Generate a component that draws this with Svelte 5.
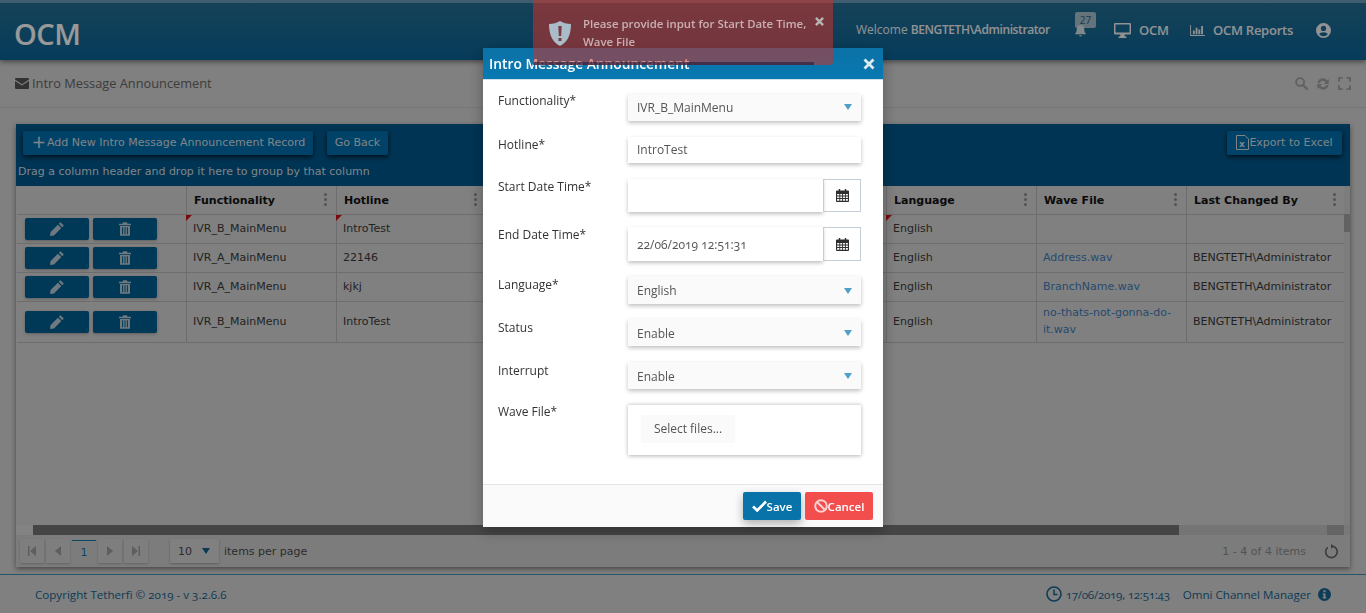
<script>
  const rows = [
    { fn: 'IVR_B_MainMenu', hotline: 'IntroTest', lang: 'English', wave: '', by: '', flagged: true },
    { fn: 'IVR_A_MainMenu', hotline: '22146', lang: 'English', wave: 'Address.wav', by: 'BENGTETH\\Administrator' },
    { fn: 'IVR_A_MainMenu', hotline: 'kjkj', lang: 'English', wave: 'BranchName.wav', by: 'BENGTETH\\Administrator' },
    { fn: 'IVR_B_MainMenu', hotline: 'IntroTest', lang: 'English', wave: 'no-thats-not-gonna-do-it.wav', by: 'BENGTETH\\Administrator', tall: true }
  ]
  const heads = ['', 'Functionality', 'Hotline', '', 'Language', 'Wave File', 'Last Changed By']
</script>

{#snippet pencil()}
  <svg class="ico" viewBox="0 0 16 16" width="16" height="16"><path d="M11.400 1.200 14.800 4.600 13.200 6.200 9.800 2.800ZM8.900 3.700 12.300 7.100 5 14.400 1 15 1.600 11Z" fill="currentColor"/></svg>
{/snippet}
{#snippet trash()}
  <svg class="ico" viewBox="0 0 14 16" width="12" height="14"><path d="M5 0h4l1 2h4v1.500H0V2h4ZM1.200 4.500h11.600V15a1 1 0 0 1-1 1H2.200a1 1 0 0 1-1-1ZM3.600 6v8h1.200V6ZM6.400 6v8h1.200V6ZM9.200 6v8h1.200V6Z" fill="currentColor" fill-rule="evenodd"/></svg>
{/snippet}
{#snippet calendar()}
  <svg viewBox="0 0 14 14" width="13" height="13"><path d="M3 0h1.500v1.500h5V0H11v1.500h2a1 1 0 0 1 1 1V13a1 1 0 0 1-1 1H1a1 1 0 0 1-1-1V2.500a1 1 0 0 1 1-1h2ZM1.200 5.300v1.700h2.400V5.300ZM4.600 5.300v1.700h2V5.300ZM7.600 5.300v1.700h2V5.300ZM10.600 5.300v1.700h2.200V5.300ZM1.200 8v1.800h2.400V8ZM4.600 8v1.800h2V8ZM7.600 8v1.800h2V8ZM10.600 8v1.800h2.200V8ZM1.200 10.800v1.900h2.400v-1.900ZM4.600 10.800v1.900h2v-1.900ZM7.600 10.800v1.900h2v-1.900ZM10.600 10.800v1.900h2.200v-1.900Z" fill="#2e2e2e" fill-rule="evenodd"/></svg>
{/snippet}
{#snippet caret()}
  <span class="caret"></span>
{/snippet}

<div class="page">
  <header class="nav">
    <div class="logo">OCM</div>
    <div class="nav-right">
      <span class="welcome">Welcome <b>BENGTETH\Administrator</b></span>
      <span class="bell">
        <span class="badge">27</span>
        <svg viewBox="0 0 14 14" width="13" height="13"><path d="M7 1a4 4 0 0 1 4 4c0 3.500 1 4.500 2 5.500v.5H1v-.5c1-1 2-2 2-5.500a4 4 0 0 1 4-4ZM5.500 12h3a1.500 1.500 0 0 1-3 0Z" fill="currentColor"/></svg>
      </span>
      <span class="nav-link nav-ocm">
        <svg viewBox="0 0 17 15" width="17" height="15"><path d="M1.200 0h14.600A1.200 1.200 0 0 1 17 1.200v9.100a1.200 1.200 0 0 1-1.200 1.200H10.500l.5 2H12.500V15h-8v-1.500H6l.5-2H1.200A1.200 1.200 0 0 1 0 10.300V1.200A1.200 1.200 0 0 1 1.200 0ZM1.500 1.500V9.500h14V1.500Z" fill="currentColor" fill-rule="evenodd"/></svg>
        OCM
      </span>
      <span class="nav-link nav-rep">
        <svg viewBox="0 0 16 12" width="15" height="11"><path d="M0 0h1v11h15v1H0ZM3 6h2v4H3ZM6 3h2v7H6ZM9 5h2v5H9ZM12 1h2v9h-2Z" fill="currentColor"/></svg>
        OCM Reports
      </span>
      <svg class="user" viewBox="0 0 16 16" width="15" height="15"><path d="M8 0a8 8 0 1 1 0 16A8 8 0 0 1 8 0ZM8 3a2.800 2.800 0 1 0 0 5.600A2.800 2.800 0 0 0 8 3ZM8 9.800c-2.200 0-4 .8-4.500 2.200A6 6 0 0 0 8 14a6 6 0 0 0 4.500-2c-.5-1.400-2.300-2.200-4.500-2.200Z" fill="currentColor" fill-rule="evenodd"/></svg>
    </div>
  </header>

  <div class="titlebar">
    <svg viewBox="0 0 14 11" width="14" height="11"><path d="M0 1a1 1 0 0 1 1-1h12a1 1 0 0 1 1 1v.6L7 6.200 0 1.600ZM0 3l7 4.500L14 3v7a1 1 0 0 1-1 1H1a1 1 0 0 1-1-1Z" fill="#555"/></svg>
    <span class="crumb">Intro Message Announcement</span>
    <div class="tools">
      <svg viewBox="0 0 14 14" width="13" height="13"><circle cx="5.500" cy="5.500" r="4.300" fill="none" stroke="currentColor" stroke-width="2"/><path d="M8.800 8.800 13 13" stroke="currentColor" stroke-width="2.400" stroke-linecap="round"/></svg>
      <svg viewBox="0 0 14 14" width="14" height="14"><path d="M1.500 6a5.500 5.500 0 0 1 9.700-2.600L12.800 2V7H7.800l1.800-1.800A3.300 3.300 0 0 0 3.700 6ZM12.500 8a5.500 5.500 0 0 1-9.700 2.600L1.200 12V7H6.200L4.400 8.800A3.300 3.300 0 0 0 10.300 8Z" fill="currentColor"/></svg>
      <svg viewBox="0 0 14 14" width="13" height="13"><path d="M0 0h5v2H2v3H0ZM9 0h5v5h-2V2H9ZM0 9h2v3h3v2H0ZM12 9h2v5H9v-2h3Z" fill="currentColor"/></svg>
    </div>
  </div>

  <main class="content">
    <section class="card">
      <div class="toolbar">
        <div class="toolbar-btns">
          <button class="tbtn add"><span class="plus">+</span>Add New Intro Message Announcement Record</button>
          <button class="tbtn back">Go Back</button>
          <button class="tbtn export">
            <svg viewBox="0 0 13 15" width="13" height="15"><path d="M.5.500H9L12.500 4v10.500H.5Z" fill="none" stroke="currentColor"/><text x="3" y="12" font-size="9" font-weight="700" fill="currentColor" font-family="DejaVu Sans">x</text></svg>Export to Excel
          </button>
        </div>
        <div class="drag">Drag a column header and drop it here to group by that column</div>
      </div>

      <div class="grid">
        <div class="gcols">
          <div class="row head">
            {#each heads as h, i}
              <div class="cell">
                {h}
                {#if h}<span class="dots"><i></i><i></i><i></i></span>{/if}
              </div>
            {/each}
          </div>
          {#each rows as r}
            <div class="row" class:tall={r.tall}>
              <div class="cell acts">
                <button class="act">{@render pencil()}</button>
                <button class="act">{@render trash()}</button>
              </div>
              <div class="cell" class:dirty={r.flagged}>{r.fn}</div>
              <div class="cell" class:dirty={r.flagged}>{r.hotline}</div>
              <div class="cell"></div>
              <div class="cell" class:dirty={r.flagged}>{r.lang}</div>
              <div class="cell link">{r.wave}</div>
              <div class="cell">{r.by}</div>
            </div>
          {/each}
        </div>
        <div class="vscroll"><span></span></div>
      </div>

      <div class="hscroll"><span class="start"></span><span class="thumb"></span><span class="track"></span><span class="end"></span></div>

      <div class="pager">
        <span class="pbtn"><svg viewBox="0 0 8 10" width="8" height="10"><path d="M0 0h1.500v10H0ZM8 0v10L2 5Z" fill="currentColor"/></svg></span>
        <span class="pbtn"><svg viewBox="0 0 6 10" width="6" height="10"><path d="M6 0v10L0 5Z" fill="currentColor"/></svg></span>
        <span class="pcur">1</span>
        <span class="pbtn"><svg viewBox="0 0 6 10" width="6" height="10"><path d="M0 0v10L6 5Z" fill="currentColor"/></svg></span>
        <span class="pbtn"><svg viewBox="0 0 8 10" width="8" height="10"><path d="M0 0v10L6 5ZM6.500 0H8v10H6.500Z" fill="currentColor"/></svg></span>
        <span class="psize">10 {@render caret()}</span>
        <span class="pinfo">items per page</span>
        <span class="pcount">1 - 4 of 4 items</span>
        <svg class="preload" viewBox="0 0 16 16" width="15" height="15"><path d="M9.500 2.300A6.200 6.200 0 1 1 4 3.500" fill="none" stroke="currentColor" stroke-width="1.700"/><path d="M7.500 0 11 2.500 7.500 5Z" fill="currentColor"/></svg>
      </div>
    </section>
  </main>

  <footer class="foot">
    <span>Copyright Tetherfi © 2019 - v 3.2.6.6</span>
    <span class="foot-right">
      <svg viewBox="0 0 16 16" width="16" height="16"><circle cx="8" cy="8" r="7" fill="none" stroke="currentColor" stroke-width="1.600"/><path d="M8 3.500V8.500H11.500" fill="none" stroke="currentColor" stroke-width="1.500"/></svg>
      <span class="stamp">17/06/2019, 12:51:43</span>
      <span class="omni">Omni Channel Manager</span>
      <svg viewBox="0 0 14 14" width="13" height="13"><path d="M7 0a7 7 0 1 1 0 14A7 7 0 0 1 7 0ZM5.800 2.500v2h2.400v-2ZM5 6v1.200h.9V10H5v1.200h4V10H8.100V6Z" fill="currentColor" fill-rule="evenodd"/></svg>
    </span>
  </footer>
</div>

<div class="overlay"></div>

<div class="modal">
  <div class="mhead">
    <span>Intro Message Announcement</span>
    <svg viewBox="0 0 12 12" width="12" height="12"><path d="M1.500 1.500 10.500 10.500M10.500 1.500 1.500 10.500" stroke="#dfe9f0" stroke-width="2.800"/></svg>
  </div>
  <div class="mbody">
    <div class="frow r1"><label>Functionality*</label><div class="sel">IVR_B_MainMenu {@render caret()}</div></div>
    <div class="frow r2"><label>Hotline*</label><div class="inp">IntroTest</div></div>
    <div class="frow r3"><label>Start Date Time*</label><div class="date"><div class="inp"></div><span class="cal">{@render calendar()}</span></div></div>
    <div class="frow r4"><label>End Date Time*</label><div class="date"><div class="inp nums">22/06/2019 12:51:31</div><span class="cal">{@render calendar()}</span></div></div>
    <div class="frow r5"><label>Language*</label><div class="sel">English {@render caret()}</div></div>
    <div class="frow r6"><label>Status</label><div class="sel">Enable {@render caret()}</div></div>
    <div class="frow r7"><label>Interrupt</label><div class="sel">Enable {@render caret()}</div></div>
    <div class="frow r8"><label>Wave File*</label><div class="upload"><span class="pick">Select files...</span></div></div>
  </div>
  <div class="mfoot">
    <button class="save">
      <svg viewBox="0 0 15 12" width="15" height="12"><path d="M1 6.500 5.200 10.500 14 1.500" fill="none" stroke="#fff" stroke-width="2.600"/></svg>Save
    </button>
    <button class="cancel">
      <svg viewBox="0 0 14 14" width="14" height="14"><circle cx="7" cy="7" r="5.800" fill="none" stroke="#fbd0d0" stroke-width="2"/><path d="M3 3 11 11" stroke="#fbd0d0" stroke-width="2"/></svg>Cancel
    </button>
  </div>
</div>

<div class="toast">
  <svg class="shield" viewBox="0 0 22 25" width="22" height="25"><path d="M11 0c3 2 7 3 11 3 0 10-3 18-11 22C3 21 0 13 0 3c4 0 8-1 11-3Z" fill="#a9bcc7"/><path d="M9.300 5h3.400l-.5 10H9.800ZM9.500 17h3v3h-3Z" fill="#7a3c44"/></svg>
  <div class="toast-msg">Please provide input for Start Date Time, Wave File</div>
  <svg class="toast-x" viewBox="0 0 10 10" width="9" height="9"><path d="M1 1 9 9M9 1 1 9" stroke="#b9b4b4" stroke-width="2.600"/></svg>
  <div class="progress"></div>
</div>

<style>
  :global(body) {
    margin: 0;
    background: #d5d5d5;
    font-family: "Open Sans", sans-serif;
    overflow: hidden;
  }
  button {
    font: inherit;
    border: 0;
    cursor: pointer;
  }
  .page {
    width: 1366px;
    height: 613px;
    display: flex;
    flex-direction: column;
    overflow: hidden;
  }
  .nav {
    height: 57px;
    flex: none;
    border-top: 3px solid #6a9cb8;
    background: linear-gradient(#246e92, #0a6497);
    box-shadow: 0 2px 5px rgba(0, 0, 0, 0.45);
    display: flex;
    align-items: center;
    color: #fff;
    position: relative;
  }
  .logo {
    font-size: 29px;
    font-weight: 600;
    margin-left: 14px;
    letter-spacing: -0.5px;
    margin-top: 3px;
  }
  .nav-right {
    margin-left: auto;
    display: flex;
    align-items: center;
    font-size: 13px;
    color: #f2f4f5;
    margin-right: 35px;
    margin-top: -3px;
  }
  .welcome {
    font-size: 12px;
    width: 218px;
    white-space: nowrap;
    margin-top: -1px;
  }
  .welcome b {
    font-weight: 600;
    letter-spacing: -0.4px;
  }
  .bell {
    position: relative;
    width: 40px;
    height: 24px;
    margin-top: -8px;
    display: flex;
    align-items: flex-end;
    color: #d8e2e8;
  }
  .bell svg {
    position: relative;
    margin-bottom: 1px;
  }
  .badge {
    position: absolute;
    left: 1px;
    top: -2px;
    width: 21px;
    height: 16px;
    background: #a8c0cc;
    border-radius: 2px;
    font-size: 10px;
    line-height: 16px;
    text-align: center;
    color: #2b6584;
  }
  .nav-link {
    display: flex;
    align-items: center;
    gap: 8px;
    font-weight: 600;
    letter-spacing: -0.25px;
  }
  .nav-ocm {
    width: 76px;
  }
  .nav-rep {
    width: 126px;
  }
  .user {
    color: #f2f4f5;
  }
  .titlebar {
    height: 47px;
    flex: none;
    border-bottom: 1px solid #c4c4c4;
    display: flex;
    align-items: center;
    gap: 3px;
    padding: 0 15px;
    font-size: 12.8px;
    color: #666;
  }
  .crumb {
    margin-top: -1px;
  }
  .tools {
    margin-left: auto;
    display: flex;
    align-items: center;
    gap: 8px;
    color: #a2a2a2;
  }
  .content {
    flex: none;
    height: 467px;
    padding: 16px 16px 0;
    box-sizing: border-box;
    border-bottom: 1px solid #3d8fb3;
  }
  .card {
    height: 443px;
    display: flex;
    flex-direction: column;
    box-shadow: 0 2px 5px rgba(0, 0, 0, 0.45);
    font-family: "DejaVu Sans", sans-serif;
    font-size: 11px;
  }
  .toolbar {
    height: 62px;
    flex: none;
    background: #00588c;
    box-sizing: border-box;
    padding: 7px 8px 0 2px;
    color: #d5dde2;
  }
  .toolbar-btns {
    display: flex;
    height: 24px;
  }
  .tbtn {
    background: #006fae;
    color: #d5dde2;
    border-radius: 2px;
    height: 24px;
    padding: 0 0 2px;
    font-family: "DejaVu Sans", sans-serif;
    font-size: 11px;
    box-shadow: 0 2px 5px rgba(0, 0, 0, 0.7);
    display: flex;
    align-items: center;
    justify-content: center;
  }
  .add {
    width: 290px;
    margin-left: 5px;
    padding-left: 1px;
  }
  .plus {
    font-size: 17px;
    line-height: 1;
    margin-right: 1px;
  }
  .back {
    width: 61px;
    margin-left: 14px;
  }
  .export {
    width: 115px;
    margin-left: auto;
  }
  .drag {
    margin-top: 10px;
    font-weight: 400;
  }
  .grid {
    flex: 1;
    min-height: 0;
    display: flex;
    background: #d5d5d5;
    padding-left: 1px;
  }
  .gcols {
    width: 1327px;
  }
  .row {
    display: grid;
    grid-template-columns: 170px 150px 150px 400px 150px 150px 157px;
    height: 29px;
    border-bottom: 1px solid #b6b6b6;
    box-sizing: border-box;
    color: #3a3a3a;
  }
  .row.head {
    height: 29px;
    font-weight: 700;
    color: #111;
  }
  .row.tall {
    height: 41px;
  }
  .cell {
    position: relative;
    border-right: 1px solid #b6b6b6;
    padding: 0 6px 2px;
    display: flex;
    align-items: center;
    line-height: 17px;
  }
  .head .cell {
    padding: 0 6px 0 7px;
  }
  .row .cell:last-child {
    border-right: 0;
  }
  .dirty::before {
    content: "";
    position: absolute;
    left: -1px;
    top: 0;
    border-style: solid;
    border-width: 6px 6px 0 0;
    border-color: #d01018 transparent transparent transparent;
  }
  .link {
    color: #3f7cb8;
  }
  .dots {
    position: absolute;
    right: 9px;
    top: 7px;
    display: flex;
    flex-direction: column;
    gap: 2px;
  }
  .cell:last-child .dots {
    right: 8px;
  }
  .dots i {
    width: 3px;
    height: 3px;
    border-radius: 50%;
    background: #8a8a8a;
  }
  .acts {
    padding: 0 0 0 8px;
    gap: 4px;
  }
  .act {
    width: 64px;
    height: 22px;
    background: #005f92;
    color: #b9cad5;
    border-radius: 2px;
    padding: 0;
    display: flex;
    align-items: center;
    justify-content: center;
    box-shadow: 0 1px 3px rgba(0, 0, 0, 0.25);
  }
  .vscroll {
    width: 6px;
    margin-left: auto;
    background: #cfcfcf;
    position: relative;
  }
  .vscroll span {
    position: absolute;
    top: 28px;
    left: 0;
    width: 6px;
    height: 18px;
    background: #a3a3a3;
  }
  .hscroll {
    height: 10px;
    flex: none;
    display: flex;
    background: #c8c8c8;
  }
  .hscroll span {
    display: block;
  }
  .start {
    width: 17px;
    background: #dadada;
  }
  .thumb {
    width: 1146px;
    background: #747474;
  }
  .track {
    width: 148px;
    background: #c4c4c4;
  }
  .end {
    width: 17px;
    background: #a8a8a8;
  }
  .pager {
    height: 32px;
    flex: none;
    display: flex;
    align-items: center;
    padding: 0 11px 0 4px;
    background: #cfcfcf;
    font-size: 11px;
    color: #4a4a4a;
  }
  .pbtn {
    width: 24px;
    height: 24px;
    margin-right: 2px;
    background: #d2d2d2;
    box-shadow: 0 1px 2px rgba(0, 0, 0, 0.2);
    display: flex;
    align-items: center;
    justify-content: center;
    color: #9d9d9d;
  }
  .pcur {
    width: 24px;
    height: 23px;
    margin-right: 2px;
    margin-top: 1px;
    border-top: 1px solid #1675a8;
    line-height: 24px;
    text-align: center;
    color: #1675a8;
  }
  .psize {
    margin-left: 20px;
    width: 49px;
    height: 24px;
    box-sizing: border-box;
    padding: 0 9px 0 8px;
    background: #d5d5d5;
    box-shadow: 0 1px 2px rgba(0, 0, 0, 0.25);
    display: flex;
    align-items: center;
    justify-content: space-between;
  }
  .psize .caret {
    border-top-color: #0f5f8e;
  }
  .pinfo {
    margin-left: 5px;
  }
  .pcount {
    margin-left: auto;
    margin-right: -1px;
    color: #8a8a8a;
  }
  .preload {
    margin-left: 19px;
    color: #636363;
  }
  .foot {
    flex: 1;
    display: flex;
    justify-content: space-between;
    align-items: center;
    padding: 0 35px;
    font-size: 11.6px;
    font-variant-numeric: oldstyle-nums;
    color: #16648f;
  }
  .foot-right {
    display: flex;
    align-items: center;
    gap: 4px;
  }
  .stamp {
    letter-spacing: -0.25px;
  }
  .omni {
    margin: 0 3px 0 9px;
  }
  .overlay {
    position: fixed;
    inset: 0;
    background: rgba(0, 0, 0, 0.4);
  }
  .modal {
    position: fixed;
    left: 483px;
    top: 48px;
    width: 400px;
    background: #fff;
    box-shadow: 0 4px 14px rgba(0, 0, 0, 0.3);
  }
  .mhead {
    height: 31px;
    background: linear-gradient(#0b72a6, #0879b2);
    display: flex;
    align-items: center;
    justify-content: space-between;
    padding: 0 8px 0 6px;
    font-size: 13.8px;
    font-weight: 600;
    color: #fff;
    border-bottom: 1px solid #cfe0ea;
    box-sizing: content-box;
  }
  .mbody {
    padding: 14px 22px 29px 15px;
    border-top: 0;
  }
  .frow {
    display: grid;
    grid-template-columns: 130px 233px;
    margin-bottom: 15px;
    font-size: 12px;
    color: #555;
  }
  .frow:last-child {
    margin-bottom: 0;
  }
  .r1,
  .r2,
  .r6 {
    margin-bottom: 16px;
  }
  label {
    color: #333;
    font-weight: 500;
    line-height: 16px;
  }
  .r1 label {
    margin-top: -1px;
  }
  .r5 label,
  .r6 label,
  .r7 label {
    margin-top: 1px;
  }
  .sel {
    height: 27px;
    background: #fafafa;
    box-shadow: 0 2px 4px rgba(0, 0, 0, 0.25);
    display: flex;
    align-items: center;
    justify-content: space-between;
    padding: 0 9px;
    border-radius: 1px;
    box-sizing: border-box;
  }
  .r1 .sel {
    padding-bottom: 1px;
  }
  .r5 .sel,
  .r6 .sel,
  .r7 .sel {
    padding-top: 1px;
  }
  .r5 .sel {
    height: 28px;
  }
  .inp {
    height: 26px;
    line-height: 26px;
    padding: 0 9px;
    background: #fff;
    box-shadow: 0 2px 4px rgba(0, 0, 0, 0.25);
  }
  .nums {
    font-variant-numeric: oldstyle-nums;
  }
  .date {
    display: flex;
  }
  .date .inp {
    flex: 1;
    height: 33px;
    line-height: 35px;
  }
  .r4 .date .inp {
    height: 34px;
  }
  .cal {
    width: 38px;
    box-sizing: border-box;
    border: 1px solid #c4cdd6;
    display: flex;
    align-items: center;
    justify-content: center;
  }
  .caret {
    width: 0;
    height: 0;
    border-style: solid;
    border-width: 6px 4px 0;
    border-color: #4f9fca transparent transparent;
  }
  .upload {
    height: 51px;
    box-sizing: border-box;
    border-top: 1px solid #e2e2e2;
    box-shadow: 0 1px 4px rgba(0, 0, 0, 0.3);
    padding: 10px 13px;
  }
  .pick {
    display: block;
    width: 94px;
    height: 28px;
    line-height: 28px;
    text-align: center;
    background: #fafafa;
  }
  .mfoot {
    height: 43px;
    box-sizing: border-box;
    background: #fafafa;
    border-top: 1px solid #e6e6e6;
    display: flex;
    justify-content: flex-end;
    align-items: flex-start;
    gap: 4px;
    padding: 7px 10px 0 0;
  }
  .mfoot button {
    height: 28px;
    border-radius: 2px;
    color: #fff;
    font-size: 11.5px;
    font-weight: 600;
    display: flex;
    align-items: center;
    justify-content: center;
    padding: 0;
  }
  .save {
    width: 58px;
    background: #0873a9;
    box-shadow: 0 4px 10px rgba(0, 0, 0, 0.3);
  }
  .cancel {
    width: 68px;
    background: #f34e4e;
  }
  .toast {
    position: fixed;
    left: 533px;
    top: 0;
    width: 300px;
    height: 65px;
    background: rgba(212, 48, 38, 0.53);
    border-radius: 0 0 3px 3px;
    font-size: 11.4px;
    font-weight: 600;
    color: rgba(255, 255, 255, 0.6);
    line-height: 18px;
  }
  .shield {
    position: absolute;
    left: 16px;
    top: 21px;
  }
  .toast-msg {
    position: absolute;
    left: 50px;
    top: 15px;
    width: 232px;
  }
  .toast-x {
    position: absolute;
    right: 9px;
    top: 17px;
  }
  .progress {
    position: absolute;
    left: 0;
    bottom: 0;
    height: 3px;
    width: 281px;
    background: rgba(40, 30, 60, 0.65);
  }
</style>
